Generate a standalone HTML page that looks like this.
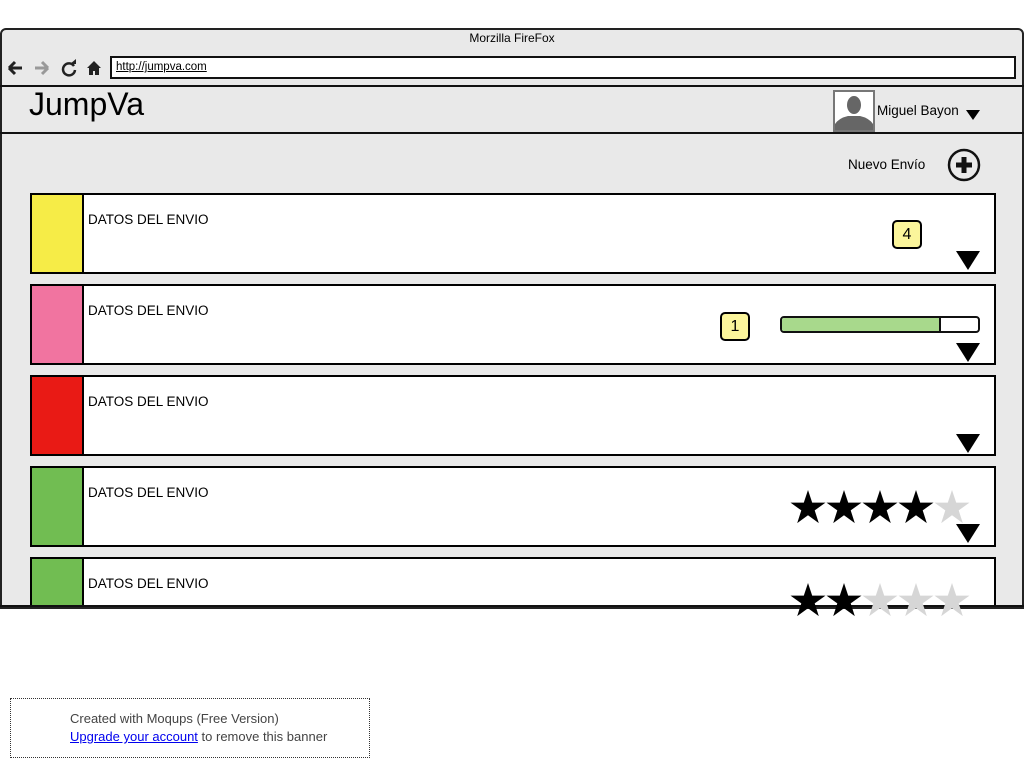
<!DOCTYPE html>
<html><head><style>
body{margin:0;width:1024px;height:768px;background:#fff;font-family:"Liberation Sans",sans-serif;position:relative;overflow:hidden}
.a{position:absolute}
.frame{left:0;top:28px;width:1020px;height:577px;border:2px solid #222;border-radius:6px 6px 0 0;background:#e9e9e9}
.card{left:30px;width:962px;height:77px;border:2px solid #000;background:#fff}
.sw{left:0;top:0;width:50px;height:77px;border-right:2px solid #000}
.t{left:56px;top:17px;font-size:13.5px;color:#000}
.tri{width:0;height:0;border-left:12px solid transparent;border-right:12px solid transparent;border-top:19px solid #000}
.badge{width:26px;height:25px;border:2px solid #000;border-radius:5px;background:#fbf59b;font-size:16px;text-align:center;line-height:25px}
</style></head><body>
<svg width="0" height="0" style="position:absolute"><defs><path id="s" d="M18 0l4.2 12.6h13.3l-10.8 7.8 4.1 12.7-10.8-7.9-10.8 7.9 4.1-12.7-10.8-7.8h13.3z"/></defs></svg>
<div class="a frame"></div>
<div class="a" style="left:0;top:31px;width:1024px;text-align:center;font-size:12px">Morzilla FireFox</div>
<svg class="a" style="left:6px;top:58px" width="100" height="20" viewBox="0 0 100 20">
<path d="M3 10h13M3 10l6-6M3 10l6 6" stroke="#222" stroke-width="3" fill="none"/>
<path d="M29 10h13M42 10l-6-6M42 10l-6 6" stroke="#999" stroke-width="3" fill="none"/>
<path d="M68 8a6 6 0 1 0 1 4" stroke="#222" stroke-width="2.5" fill="none"/><path d="M64 6l6 0 0-5z" fill="#222"/>
<path d="M81 10l7-7 7 7h-2v7h-4v-4h-2v4h-4v-7z" fill="#222"/>
</svg>
<div class="a" style="left:110px;top:56px;width:898px;height:19px;border:2px solid #111;background:#fff;font-size:11.5px;line-height:19px;padding-left:4px"><u>http://jumpva.com</u></div>
<div class="a" style="left:0;top:85px;width:1024px;height:2px;background:#111"></div>
<div class="a" style="left:0;top:132px;width:1024px;height:2px;background:#111"></div>
<div class="a" style="left:29px;top:86px;font-size:32px">JumpVa</div>
<div class="a" style="left:833px;top:90px;width:38px;height:38px;border:2px solid #777;background:#fff;overflow:hidden">
<svg width="38" height="38"><ellipse cx="19" cy="13" rx="7" ry="9" fill="#666"/><path d="M0 38v-6q4-6 13-8h12q9 2 13 8v6z" fill="#666"/></svg></div>
<div class="a" style="left:877px;top:103px;font-size:13.5px">Miguel Bayon</div>
<div class="a tri" style="left:966px;top:110px;border-left-width:7px;border-right-width:7px;border-top-width:10px"></div>
<div class="a" style="left:848px;top:157px;font-size:13.5px">Nuevo Envío</div>
<svg class="a" style="left:947px;top:148px" width="34" height="34"><circle cx="17" cy="17" r="15" fill="none" stroke="#111" stroke-width="2.5"/><path d="M17 9v16M9 17h16" stroke="#111" stroke-width="5"/></svg>

<div class="a card" style="top:193px"><div class="a sw" style="background:#f6ec47"></div><div class="a t">DATOS DEL ENVIO</div>
<div class="a badge" style="left:860px;top:25px">4</div><div class="a tri" style="left:924px;top:56px"></div></div>

<div class="a card" style="top:284px"><div class="a sw" style="background:#f174a0"></div><div class="a t">DATOS DEL ENVIO</div>
<div class="a badge" style="left:688px;top:26px">1</div>
<div class="a" style="left:748px;top:30px;width:196px;height:13px;border:2px solid #111;border-radius:4px;background:#fff;overflow:hidden"><div style="width:157px;height:13px;background:#a8d98c;border-right:2px solid #111"></div></div>
<div class="a tri" style="left:924px;top:57px"></div></div>

<div class="a card" style="top:375px"><div class="a sw" style="background:#e91a15"></div><div class="a t">DATOS DEL ENVIO</div>
<div class="a tri" style="left:924px;top:57px"></div></div>

<div class="a card" style="top:466px"><div class="a sw" style="background:#71bd52"></div><div class="a t">DATOS DEL ENVIO</div>
<div class="a tri" style="left:924px;top:56px"></div></div>

<div class="a card" style="top:557px;height:48px;border-bottom:none"><div class="a sw" style="background:#71bd52;height:48px"></div><div class="a t">DATOS DEL ENVIO</div></div>
<div class="a" style="left:0;top:605px;width:1024px;height:2px;background:#111"></div>

<svg class="a" style="left:790px;top:490px" width="180" height="34"><use href="#s" x="0"/><use href="#s" x="36"/><use href="#s" x="72"/><use href="#s" x="108"/><use href="#s" x="144" fill="#d6d6d6"/></svg>
<svg class="a" style="left:790px;top:583px" width="180" height="34"><use href="#s" x="0"/><use href="#s" x="36"/><use href="#s" x="72" fill="#d6d6d6"/><use href="#s" x="108" fill="#d6d6d6"/><use href="#s" x="144" fill="#d6d6d6"/></svg>

<div class="a" style="left:10px;top:698px;width:358px;height:58px;border:1px dotted #333;font-size:13px;color:#444">
<div style="position:absolute;left:59px;top:11px;line-height:18px">Created with Moqups (Free Version)<br><u style="color:#00e">Upgrade your account</u> to remove this banner</div></div>
</body></html>
